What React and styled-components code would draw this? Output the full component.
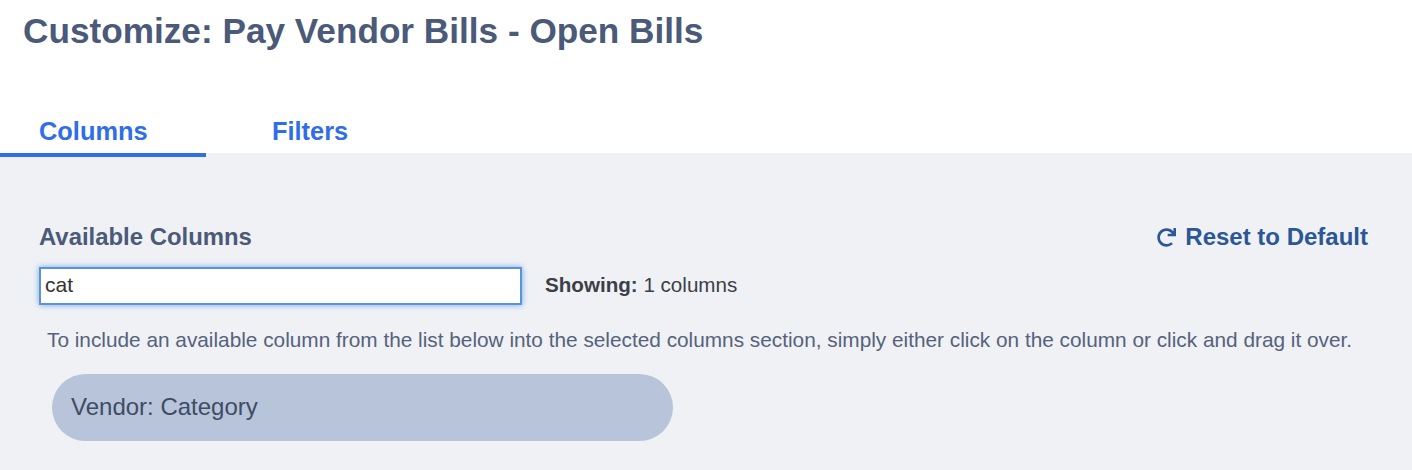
import React, { useState } from "react";
import styled, { createGlobalStyle } from "styled-components";
import { FaRedo } from "react-icons/fa";

const GlobalStyle = createGlobalStyle`
  html, body {
    margin: 0;
    padding: 0;
    background: #ffffff;
  }
  body {
    font-family: "Liberation Sans", Arial, sans-serif;
    overflow: hidden;
  }
`;

const Page = styled.div`
  width: 1412px;
  height: 470px;
  display: flex;
  flex-direction: column;
`;

const Title = styled.h1`
  margin: 0;
  padding: 11px 0 0 23px;
  height: 96px;
  box-sizing: border-box;
  font-size: 35.2px;
  line-height: 40px;
  font-weight: 700;
  color: #4a5a78;
`;

const Tabs = styled.div`
  display: flex;
  height: 61px;
  margin-bottom: -4px;
`;

const Tab = styled.div`
  width: ${(p) => p.$width}px;
  box-sizing: border-box;
  padding: 20px 0 0 ${(p) => p.$left}px;
  font-size: 25.4px;
  line-height: 30px;
  font-weight: 700;
  color: #2f6ee8;
  border-bottom: 4px solid ${(p) => (p.$active ? "#2f6ee8" : "transparent")};
  position: relative;
  z-index: 1;
`;

const Panel = styled.div`
  flex: 1;
  background: #eff1f5;
  padding: 72px 44px 0 39px;
`;

const HeaderRow = styled.div`
  display: flex;
  justify-content: space-between;
  align-items: center;
  height: 24px;
`;

const SectionLabel = styled.div`
  font-size: 23.9px;
  font-weight: 700;
  color: #4a5a78;
`;

const ResetLink = styled.a`
  display: flex;
  align-items: center;
  gap: 9px;
  font-size: 24px;
  font-weight: 700;
  color: #2b5797;
  cursor: pointer;
`;

const SearchRow = styled.div`
  display: flex;
  align-items: center;
  margin-top: 18px;
  gap: 23px;
`;

const SearchInput = styled.input`
  width: 483px;
  height: 38px;
  box-sizing: border-box;
  padding: 0 4px 2px;
  border: 2px solid #5a93d8;
  box-shadow: 0 0 6px #6ea6e6;
  outline: none;
  background: #ffffff;
  font-family: inherit;
  font-size: 21px;
  color: #333333;
`;

const Showing = styled.div`
  padding-bottom: 2px;
  font-size: 20.6px;
  color: #3c3f46;
  b {
    font-weight: 700;
  }
`;

const Hint = styled.p`
  margin: 23px 0 0 8px;
  font-size: 20.8px;
  line-height: 24px;
  color: #56627c;
  white-space: nowrap;
`;

const ColumnPill = styled.div`
  width: 621px;
  height: 67px;
  margin: 22px 0 0 13px;
  padding: 0 0 1px 19px;
  box-sizing: border-box;
  display: flex;
  align-items: center;
  border-radius: 34px;
  background: #b7c4da;
  font-size: 24px;
  color: #3f4c64;
`;

const App = () => {
  const [search, setSearch] = useState("cat");

  return (
    <Page>
      <GlobalStyle />
      <Title>Customize: Pay Vendor Bills - Open Bills</Title>
      <Tabs>
        <Tab $active $width={206} $left={39}>
          Columns
        </Tab>
        <Tab $width={300} $left={66}>
          Filters
        </Tab>
      </Tabs>
      <Panel>
        <HeaderRow>
          <SectionLabel>Available Columns</SectionLabel>
          <ResetLink>
            <FaRedo size={19} />
            Reset to Default
          </ResetLink>
        </HeaderRow>
        <SearchRow>
          <SearchInput
            value={search}
            onChange={(event) => setSearch(event.target.value)}
          />
          <Showing>
            <b>Showing:</b> 1 columns
          </Showing>
        </SearchRow>
        <Hint>
          To include an available column from the list below into the selected
          columns section, simply either click on the column or click and drag
          it over.
        </Hint>
        <ColumnPill>Vendor: Category</ColumnPill>
      </Panel>
    </Page>
  );
};

export default App;
